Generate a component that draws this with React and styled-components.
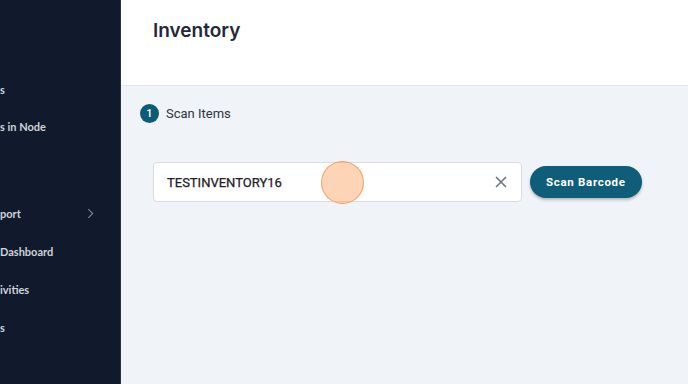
import styled, { createGlobalStyle } from 'styled-components'

const Global = createGlobalStyle`
  html, body {
    margin: 0;
    padding: 0;
    width: 688px;
    height: 384px;
    overflow: hidden;
    background: #f0f3f8;
  }
  * {
    box-sizing: border-box;
  }
`

const Page = styled.div`
  display: flex;
  width: 688px;
  height: 384px;
`

const Sidebar = styled.nav`
  width: 121px;
  flex-shrink: 0;
  background: #111a2c;
  border-right: 1px solid #2a3242;
  overflow: hidden;
  padding-top: 81px;
  display: flex;
  flex-direction: column;
`

const NavItem = styled.div`
  display: flex;
  align-items: center;
  justify-content: space-between;
  height: 17px;
  margin-bottom: ${(p) => p.gap || 21}px;
  padding-right: 26px;
  font-family: Lato, sans-serif;
  font-weight: 700;
  font-size: 11px;
  color: #d0d3da;
  white-space: nowrap;
`

function Chevron({ className }) {
  return (
    <svg className={className} viewBox="0 0 8 12" width="7" height="11">
      <path d="M1.5 1l5 5-5 5" fill="none" stroke="#7c8393" strokeWidth="1.3" />
    </svg>
  )
}

const Main = styled.main`
  flex: 1;
  display: flex;
  flex-direction: column;
`

const Header = styled.header`
  height: 86px;
  background: #ffffff;
  border-bottom: 1px solid #e1e4ea;
  padding: 19px 0 0 32px;
`

const Title = styled.h1`
  margin: 0;
  font-family: Inter, sans-serif;
  font-weight: 600;
  font-size: 19px;
  color: #1f2937;
`

const Content = styled.section`
  padding: 18px 0 0 19px;
`

const Step = styled.div`
  display: flex;
  align-items: center;
  gap: 7px;
  font-family: Roboto, sans-serif;
  font-size: 13px;
  color: #2d333b;
`

const StepBadge = styled.span`
  width: 19px;
  height: 19px;
  border-radius: 50%;
  background: #0e5b76;
  color: #fff;
  font-size: 11px;
  font-weight: 500;
  display: flex;
  align-items: center;
  justify-content: center;
`

const ScanRow = styled.div`
  display: flex;
  align-items: center;
  gap: 8px;
  margin: 39px 0 0 13px;
  position: relative;
`

const Field = styled.div`
  width: 369px;
  height: 40px;
  background: #fff;
  border: 1px solid #d8dbe2;
  border-radius: 4px;
  display: flex;
  align-items: center;
  justify-content: space-between;
  padding: 0 14px 0 13px;
  font-family: Roboto, sans-serif;
  font-weight: 400;
  font-size: 13px;
  color: #1c2026;
  -webkit-text-stroke: 0.25px #1c2026;
`

function ClearIcon() {
  return (
    <svg viewBox="0 0 12 12" width="12" height="12">
      <path d="M1 1l10 10M11 1L1 11" stroke="#6b7280" strokeWidth="1.5" />
    </svg>
  )
}

const ScanButton = styled.button`
  height: 32px;
  padding: 0 16px;
  border: none;
  border-radius: 16px;
  background: #0f5d79;
  color: #fff;
  font-family: Roboto, sans-serif;
  font-weight: 700;
  font-size: 11.5px;
  letter-spacing: 0.7px;
  box-shadow: 0 2px 3px rgba(0, 0, 0, 0.25);
`

const ClickMark = styled.span`
  position: absolute;
  left: 168px;
  top: -1px;
  width: 43px;
  height: 43px;
  border-radius: 50%;
  background: rgba(253, 170, 110, 0.5);
  border: 1.5px solid rgba(240, 150, 80, 0.8);
`

export default function App() {
  return (
    <Page>
      <Global />
      <Sidebar>
        <NavItem gap={20}>s</NavItem>
        <NavItem gap={70}>s in Node</NavItem>
        <NavItem>
          port
          <Chevron />
        </NavItem>
        <NavItem>Dashboard</NavItem>
        <NavItem>ivities</NavItem>
        <NavItem>s</NavItem>
      </Sidebar>
      <Main>
        <Header>
          <Title>Inventory</Title>
        </Header>
        <Content>
          <Step>
            <StepBadge>1</StepBadge>
            Scan Items
          </Step>
          <ScanRow>
            <Field>
              TESTINVENTORY16
              <ClearIcon />
            </Field>
            <ScanButton>Scan Barcode</ScanButton>
            <ClickMark />
          </ScanRow>
        </Content>
      </Main>
    </Page>
  )
}
